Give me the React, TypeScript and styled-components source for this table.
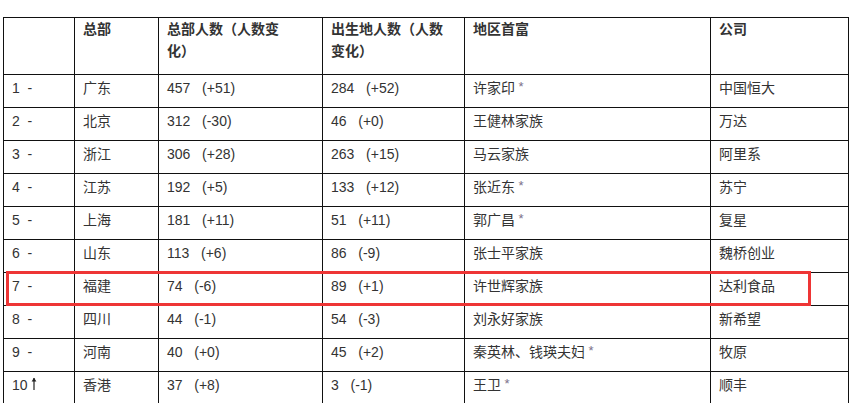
import React from "react";
import styled, { createGlobalStyle } from "styled-components";

const GlobalStyle = createGlobalStyle`
  html, body {
    margin: 0;
    padding: 0;
    background: #ffffff;
  }
  body {
    font-family: "Liberation Sans", "Noto Sans CJK SC", sans-serif;
    color: #333333;
  }
`;

const NBSP = "\u00a0";

const columns = [71, 84, 164, 142, 246, 138];

const rows: RowData[] = [
  { rank: 1, up: false, region: "广东", hq: [457, "+51"], born: [284, "+52"], rich: "许家印", star: true, company: "中国恒大" },
  { rank: 2, up: false, region: "北京", hq: [312, "-30"], born: [46, "+0"], rich: "王健林家族", company: "万达" },
  { rank: 3, up: false, region: "浙江", hq: [306, "+28"], born: [263, "+15"], rich: "马云家族", company: "阿里系" },
  { rank: 4, up: false, region: "江苏", hq: [192, "+5"], born: [133, "+12"], rich: "张近东", star: true, company: "苏宁" },
  { rank: 5, up: false, region: "上海", hq: [181, "+11"], born: [51, "+11"], rich: "郭广昌", star: true, company: "复星" },
  { rank: 6, up: false, region: "山东", hq: [113, "+6"], born: [86, "-9"], rich: "张士平家族", company: "魏桥创业" },
  { rank: 7, up: false, region: "福建", hq: [74, "-6"], born: [89, "+1"], rich: "许世辉家族", company: "达利食品" },
  { rank: 8, up: false, region: "四川", hq: [44, "-1"], born: [54, "-3"], rich: "刘永好家族", company: "新希望" },
  { rank: 9, up: false, region: "河南", hq: [40, "+0"], born: [45, "+2"], rich: "秦英林、钱瑛夫妇", star: true, company: "牧原" },
  { rank: 10, up: true, region: "香港", hq: [37, "+8"], born: [3, "-1"], rich: "王卫", star: true, company: "顺丰" },
];

const Count: React.FC<{ value: [number, string] }> = ({ value }) => (
  <>
    {value[0]}
    {NBSP}
    {NBSP}
    {NBSP}({value[1]})
  </>
);

const UpArrow: React.FC = () => (
  <ArrowIcon width="6" height="14" viewBox="0 0 6 14" aria-label="↑">
    <path d="M3 1 L3 13" stroke="#222" strokeWidth="1.2" />
    <path d="M0.6 4.6 L3 0.8 L5.4 4.6 Z" fill="#222" />
  </ArrowIcon>
);

const App: React.FC = () => {
  return (
    <>
      <GlobalStyle />
      <Page>
        <TableWrap>
          <Table>
            <thead>
              <tr>
                <HeadCell $width={columns[0]}></HeadCell>
                <HeadCell $width={columns[1]}>总部</HeadCell>
                <HeadCell $width={columns[2]}>
                  总部人数（人数变
                  <br />
                  化）
                </HeadCell>
                <HeadCell $width={columns[3]}>
                  出生地人数（人数
                  <br />
                  变化）
                </HeadCell>
                <HeadCell $width={columns[4]}>地区首富</HeadCell>
                <HeadCell $width={columns[5]}>公司</HeadCell>
              </tr>
            </thead>
            <tbody>
              {rows.map((row) => (
                <tr key={row.rank}>
                  <Cell>
                    {row.rank}
                    {row.up ? (
                      <>
                        {NBSP}
                        <UpArrow />
                      </>
                    ) : (
                      <>
                        {NBSP}
                        {NBSP}-
                      </>
                    )}
                  </Cell>
                  <Cell>{row.region}</Cell>
                  <Cell>
                    <Count value={row.hq} />
                  </Cell>
                  <Cell>
                    <Count value={row.born} />
                  </Cell>
                  <Cell>
                    {row.rich}
                    {row.star && <Star> *</Star>}
                  </Cell>
                  <Cell>{row.company}</Cell>
                </tr>
              ))}
            </tbody>
          </Table>
          <Highlight />
        </TableWrap>
      </Page>
    </>
  );
};

export default App;

interface RowData {
  rank: number;
  up: boolean;
  region: string;
  hq: [number, string];
  born: [number, string];
  rich: string;
  star?: boolean;
  company: string;
}

const Page = styled.div`
  width: 857px;
  height: 403px;
  overflow: hidden;
  padding: 17px 0 0 3px;
  box-sizing: border-box;
`;

const TableWrap = styled.div`
  position: relative;
  width: max-content;
`;

const Table = styled.table`
  border-collapse: separate;
  border-spacing: 0;
  table-layout: fixed;
  border-top: 1px solid #111;
  border-left: 1px solid #111;
  font-size: 14px;
`;

const HeadCell = styled.th<{ $width: number }>`
  width: ${({ $width }) => $width}px;
  height: 57px;
  box-sizing: border-box;
  padding: 0 8px;
  border-right: 1px solid #111;
  border-bottom: 1px solid #111;
  text-align: left;
  vertical-align: top;
  font-weight: 700;
  line-height: 22px;
  color: #333;
  white-space: nowrap;
`;

const Cell = styled.td`
  height: 33px;
  box-sizing: border-box;
  padding: 0 8px 6px 8px;
  border-right: 1px solid #111;
  border-bottom: 1px solid #111;
  vertical-align: middle;
  line-height: 20px;
  white-space: nowrap;
  color: #333;
`;

const ArrowIcon = styled.svg`
  display: inline-block;
  vertical-align: -1px;
`;

const Star = styled.span`
  color: #7a6f8a;
  font-size: 13px;
  vertical-align: top;
  line-height: 18px;
`;

const Highlight = styled.div`
  position: absolute;
  left: 3px;
  top: 254px;
  width: 805px;
  height: 35px;
  box-sizing: border-box;
  border: 3px solid #ee3535;
  pointer-events: none;
`;
